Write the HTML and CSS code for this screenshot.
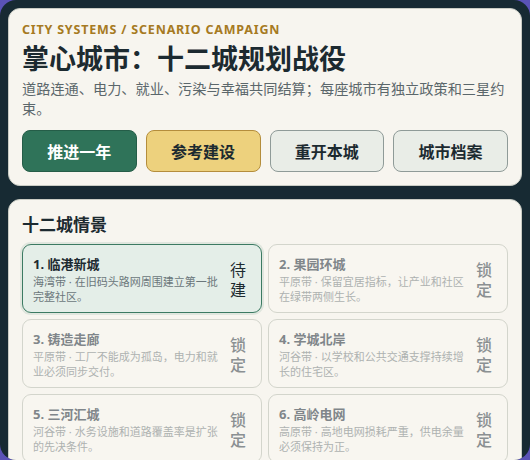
FILE: index.html
```html
<!DOCTYPE html>
<html lang="zh-CN">
  <head>
    <meta charset="UTF-8" />
    <meta name="viewport" content="width=device-width, initial-scale=1.0" />
    <title>掌心城市</title>
    <link rel="stylesheet" href="styles.css">
  </head>
  <body>
    <div class="shell">
      <header class="panel hero">
        <div class="eyebrow">City Systems / Scenario Campaign</div>
        <h1>掌心城市：十二城规划战役</h1>
        <p class="lead">道路连通、电力、就业、污染与幸福共同结算；每座城市有独立政策和三星约束。</p>
        <div class="actions">
          <button class="btn btn-primary">推进一年</button>
          <button class="btn btn-gold">参考建设</button>
          <button class="btn">重开本城</button>
          <button class="btn">城市档案</button>
        </div>
      </header>

      <section class="panel">
        <h2>十二城情景</h2>
        <div class="city-grid">
          <div class="city active">
            <div class="city-info">
              <div class="city-name">1. 临港新城</div>
              <div class="city-desc">海湾带 · 在旧码头路网周围建立第一批完整社区。</div>
            </div>
            <div class="city-state">待建</div>
          </div>
          <div class="city locked">
            <div class="city-info">
              <div class="city-name">2. 果园环城</div>
              <div class="city-desc">平原带 · 保留宜居指标，让产业和社区在绿带两侧生长。</div>
            </div>
            <div class="city-state">锁定</div>
          </div>
          <div class="city locked">
            <div class="city-info">
              <div class="city-name">3. 铸造走廊</div>
              <div class="city-desc">平原带 · 工厂不能成为孤岛，电力和就业必须同步交付。</div>
            </div>
            <div class="city-state">锁定</div>
          </div>
          <div class="city locked">
            <div class="city-info">
              <div class="city-name">4. 学城北岸</div>
              <div class="city-desc">河谷带 · 以学校和公共交通支撑持续增长的住宅区。</div>
            </div>
            <div class="city-state">锁定</div>
          </div>
          <div class="city locked">
            <div class="city-info">
              <div class="city-name">5. 三河汇城</div>
              <div class="city-desc">河谷带 · 水务设施和道路覆盖率是扩张的先决条件。</div>
            </div>
            <div class="city-state">锁定</div>
          </div>
          <div class="city locked">
            <div class="city-info">
              <div class="city-name">6. 高岭电网</div>
              <div class="city-desc">高原带 · 高地电网损耗严重，供电余量必须保持为正。</div>
            </div>
            <div class="city-state">锁定</div>
          </div>
        </div>
      </section>
    </div>
  </body>
</html>
```

FILE: styles.css
```css
body {
  margin: 0;
  background: #5a52b6;
  font-family: "Noto Sans", "Noto Sans CJK SC", sans-serif;
  color: #1c2a30;
}

.shell {
  height: 460px;
  overflow: hidden;
  box-sizing: border-box;
  padding: 8px;
  background: #172a33;
  border-radius: 16px;
  display: flex;
  flex-direction: column;
  gap: 13px;
}

.panel {
  background: #f7f5ef;
  border: 1px solid #c9ccc4;
  border-radius: 12px;
  padding: 13px 13px 13px;
}

.eyebrow {
  font-size: 12.5px;
  line-height: 16px;
  font-weight: 700;
  letter-spacing: 0.8px;
  text-transform: uppercase;
  color: #a67a22;
}

h1 {
  margin: 4px 0 0;
  font-size: 27px;
  line-height: 34px;
  font-weight: 700;
}

.lead {
  margin: 3px 0 0;
  font-size: 14.2px;
  line-height: 20px;
  color: #5b676b;
}

.actions {
  margin-top: 11px;
  display: grid;
  grid-template-columns: repeat(4, 1fr);
  gap: 9px;
}

.btn {
  height: 42px;
  font-family: inherit;
  font-size: 16px;
  font-weight: 700;
  color: #1c2a30;
  background: #e9ede7;
  border: 1px solid #8f9b98;
  border-radius: 8px;
  cursor: pointer;
}

.btn-primary {
  background: #2f7359;
  border-color: #255d48;
  color: #fff;
}

.btn-gold {
  background: #edd17d;
  border-color: #b48d3c;
}

h2 {
  margin: 0;
  font-size: 17px;
  line-height: 24px;
  font-weight: 700;
}

.city-grid {
  margin-top: 7px;
  display: grid;
  grid-template-columns: 1fr 1fr;
  gap: 6px;
}

.city {
  display: flex;
  align-items: center;
  gap: 10px;
  padding: 10px 15px 8px 10px;
  border: 1px solid #d3d5cc;
  border-radius: 9px;
  background: #f8f6f0;
}

.city-info {
  flex: 1;
}

.city-name {
  font-size: 13px;
  line-height: 18px;
  font-weight: 700;
}

.city-desc {
  margin-top: 2px;
  font-size: 11px;
  line-height: 14.5px;
  color: #6b777b;
}

.city-state {
  width: 1em;
  font-size: 16px;
  line-height: 20px;
  text-align: center;
}

.city.active {
  background: #e4eee8;
  border: 1.5px solid #3b7a62;
  box-shadow: 0 0 0 2px rgba(59, 122, 98, 0.12);
}

.city.locked .city-name {
  color: #80868a;
}

.city.locked .city-desc {
  color: #aeb2b0;
}

.city.locked .city-state {
  color: #8b9092;
  font-weight: 500;
}
```
